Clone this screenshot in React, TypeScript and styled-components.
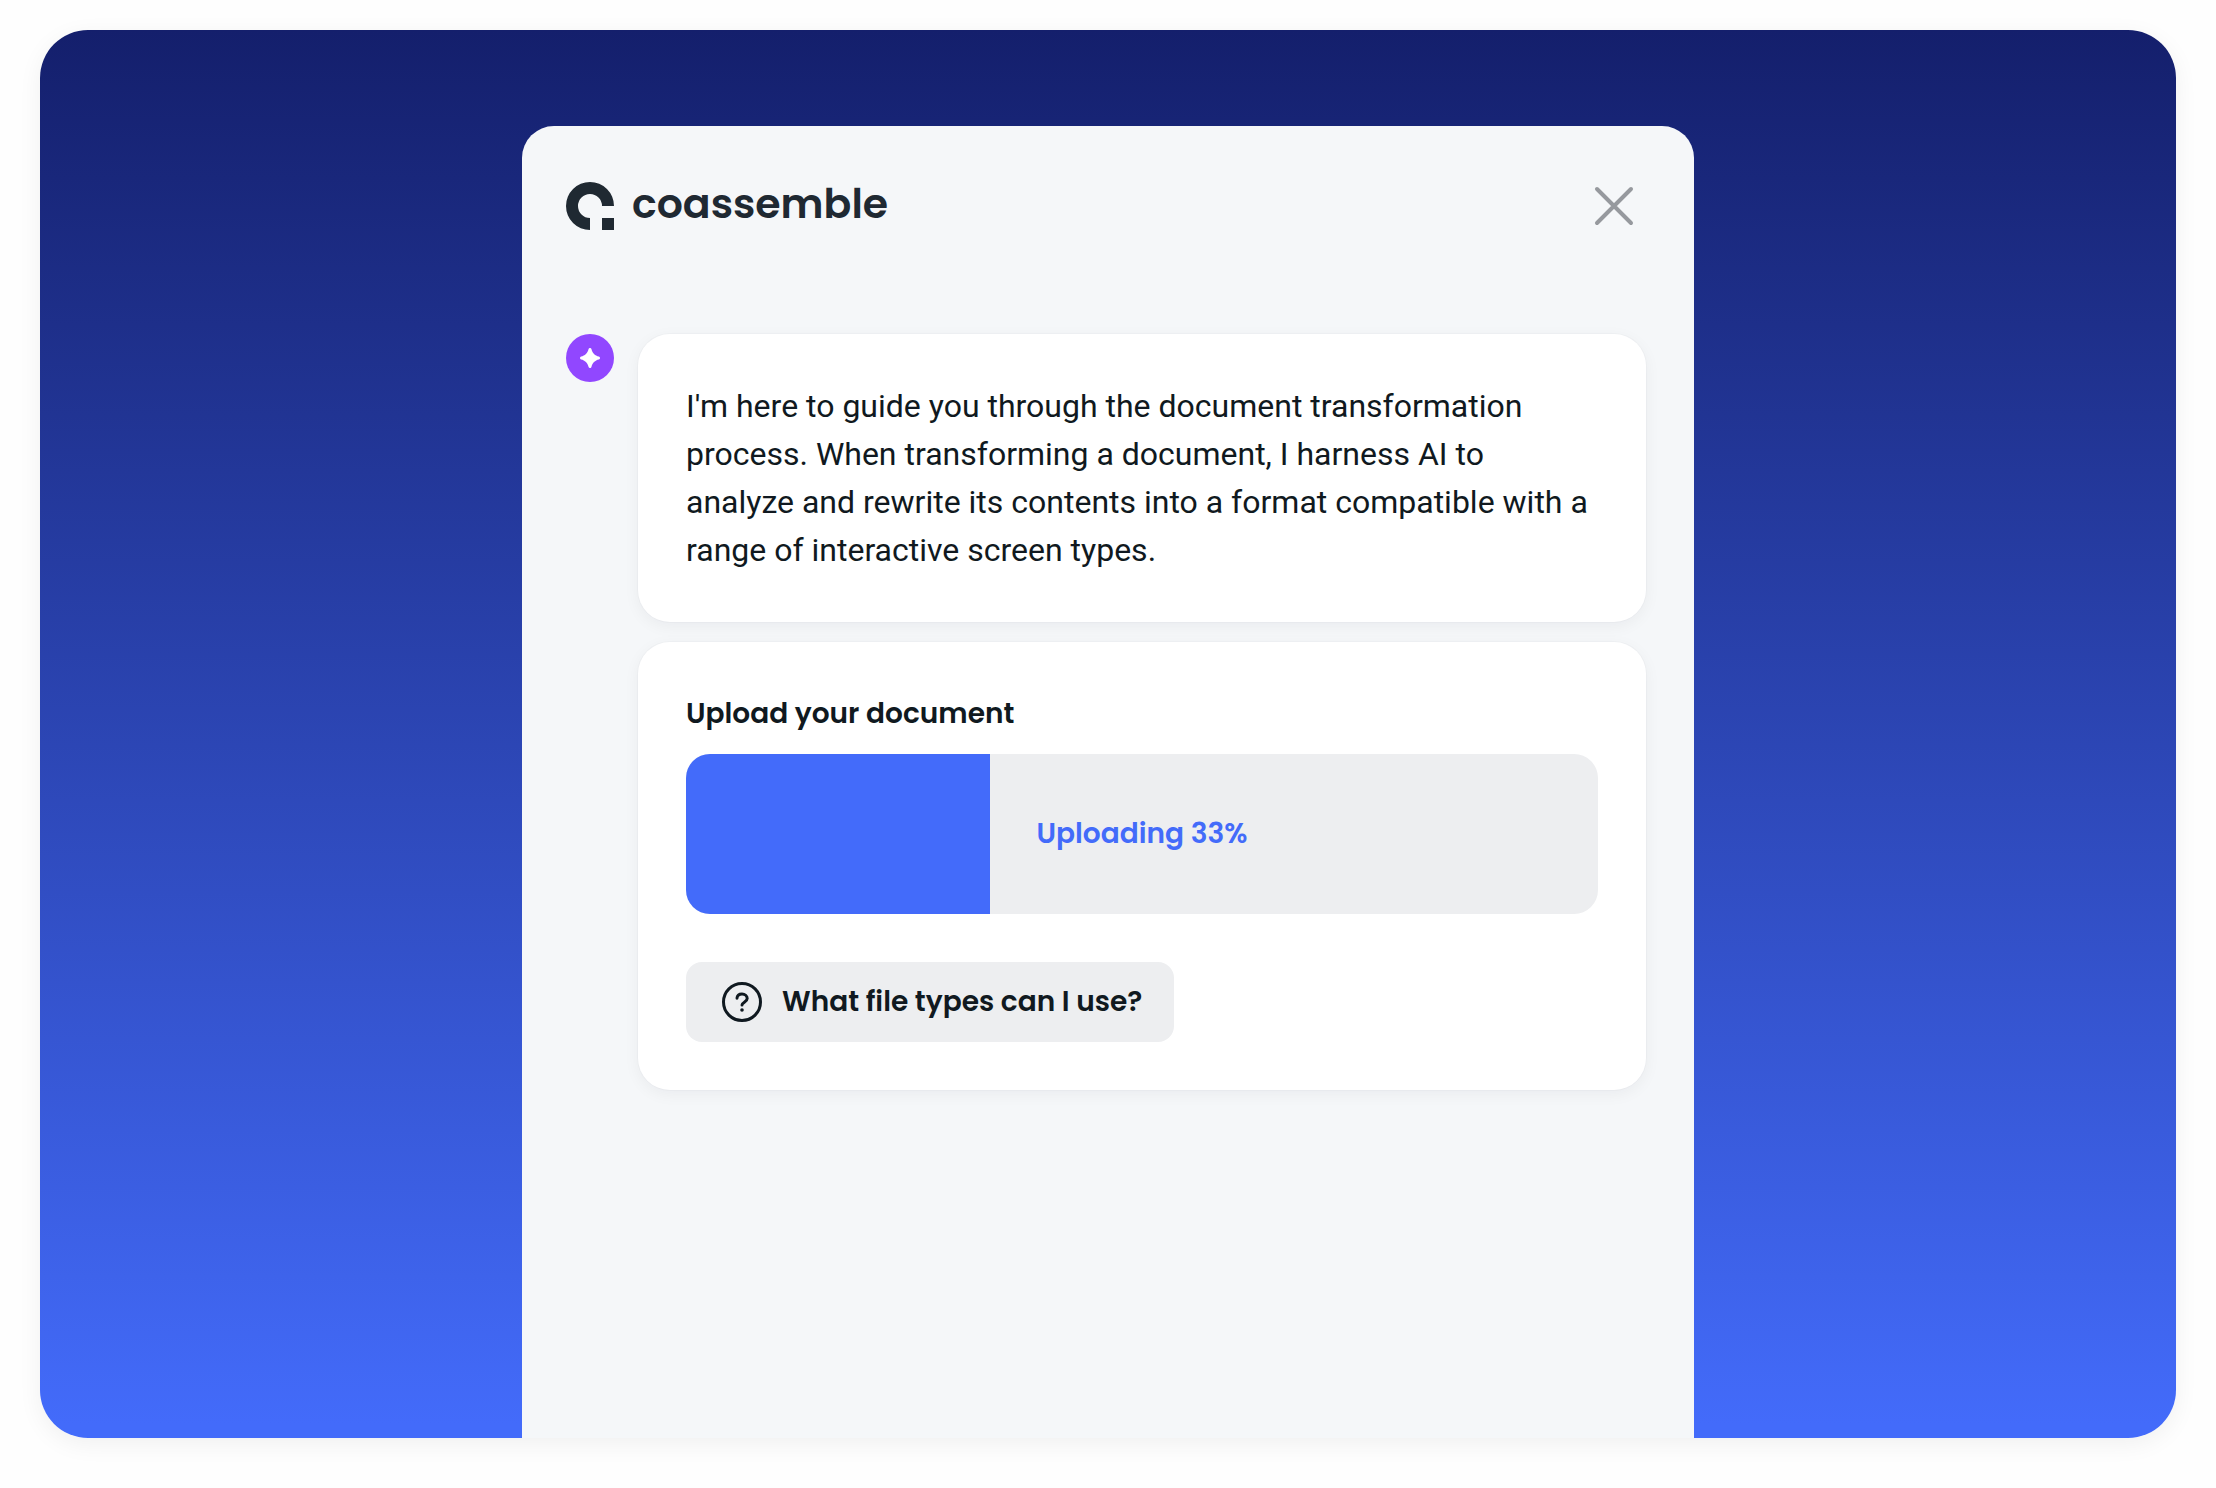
import React from "react";
import styled, { createGlobalStyle } from "styled-components";

const color = {
  ink: "#101920",
  logo: "#1f2932",
  blue: "#436bfa",
  purple: "#9147ff",
  panel: "#f5f7f9",
  neutral: "#edeef0",
  muted: "#96999e",
};

const bodyFont = `Roboto, "Open Sans", sans-serif`;
const displayFont = `Poppins, Inter, "Open Sans", sans-serif`;

const GlobalStyle = createGlobalStyle`
  *, *::before, *::after { box-sizing: border-box; }
  body { margin: 0; background: #fefefe; color: ${color.ink}; font-family: ${bodyFont}; }
`;

const Page = styled.div`
  display: flex;
  min-height: 100vh;
  padding: 30px 40px 50px;
`;

const Stage = styled.main`
  display: flex;
  flex: 1;
  justify-content: center;
  padding: 96px 40px 0;
  border-radius: 48px;
  background: linear-gradient(180deg, #141f6c 0%, ${color.blue} 99%);
  box-shadow: 0 6px 24px rgba(0, 0, 0, 0.06);
`;

const Panel = styled.section`
  display: flex;
  flex-direction: column;
  gap: 96px;
  width: 100%;
  max-width: 1172px;
  padding: 48px 48px 48px 44px;
  border-radius: 32px 32px 0 0;
  background: ${color.panel};
`;

const Header = styled.header`
  display: flex;
  align-items: center;
  justify-content: space-between;
`;

const Brand = styled.a`
  display: flex;
  align-items: center;
  gap: 18px;
  color: ${color.logo};
  font-family: ${displayFont};
  font-size: 41px;
  font-weight: 600;
  line-height: 48px;
  text-decoration: none;
`;

const BrandName = styled.span`
  padding-bottom: 4px;
`;

const CloseButton = styled.button`
  display: grid;
  place-items: center;
  width: 64px;
  height: 64px;
  padding: 0;
  border: 0;
  background: none;
  color: ${color.muted};
  cursor: pointer;
`;

const Conversation = styled.div`
  display: flex;
  align-items: flex-start;
  gap: 24px;
`;

const Avatar = styled.div`
  display: grid;
  flex: none;
  place-items: center;
  width: 48px;
  height: 48px;
  border-radius: 50%;
  background: ${color.purple};
`;

const Messages = styled.div`
  display: flex;
  flex: 1;
  flex-direction: column;
  gap: 20px;
  min-width: 0;
`;

const Bubble = styled.article`
  display: flex;
  flex-direction: column;
  align-items: flex-start;
  padding: 48px;
  border-radius: 32px;
  background: #fff;
  box-shadow: 0 0 0 1px rgba(16, 25, 32, 0.02), 0 4px 16px rgba(16, 25, 32, 0.05);
`;

const Message = styled.p`
  margin: 0;
  font-size: 32px;
  line-height: 48px;
`;

const FieldLabel = styled.label`
  margin-bottom: 16px;
  font-family: ${displayFont};
  font-size: 28px;
  font-weight: 600;
  line-height: 48px;
`;

const Upload = styled.div`
  display: grid;
  align-items: center;
  justify-items: center;
  width: 100%;
  margin-bottom: 48px;

  & > * {
    grid-area: 1 / 1;
  }
`;

const Progress = styled.progress`
  display: block;
  width: 100%;
  height: 160px;
  border: 0;
  border-radius: 24px;
  overflow: hidden;
  appearance: none;
  background: ${color.neutral};

  &::-webkit-progress-bar {
    background: ${color.neutral};
  }
  &::-webkit-progress-value {
    background: ${color.blue};
  }
  &::-moz-progress-bar {
    background: ${color.blue};
  }
`;

const Status = styled.span`
  z-index: 1;
  color: ${color.blue};
  font-family: ${displayFont};
  font-size: 28px;
  font-weight: 600;
  line-height: 48px;
`;

const HelpButton = styled.button`
  display: flex;
  align-items: center;
  gap: 16px;
  padding: 16px 32px;
  border: 0;
  border-radius: 16px;
  background: ${color.neutral};
  color: ${color.ink};
  font-family: ${displayFont};
  font-size: 28px;
  font-weight: 600;
  line-height: 48px;
  cursor: pointer;
`;

const LogoMark = () => (
  <svg width="48" height="48" viewBox="0 0 48 48" fill="currentColor" aria-hidden="true">
    <path d="M48 24A24 24 0 1 0 24 48V36A12 12 0 1 1 36 24Z" />
    <path d="M36 36H48V48H36Z" />
  </svg>
);

const CloseIcon = () => (
  <svg width="40" height="40" viewBox="0 0 40 40" fill="none" stroke="currentColor" strokeWidth="4" strokeLinecap="round" aria-hidden="true">
    <path d="M3 3L37 37M37 3L3 37" />
  </svg>
);

const SparkIcon = () => (
  <svg width="20" height="20" viewBox="0 0 20 20" fill="#fff" aria-hidden="true">
    <path d="M10 0C10.8 0 11.3 .4 11.5 1.2C12.2 4.8 15.2 7.8 18.8 8.5C19.6 8.7 20 9.2 20 10S19.6 11.3 18.8 11.5C15.2 12.2 12.2 15.2 11.5 18.8C11.3 19.6 10.8 20 10 20S8.7 19.6 8.5 18.8C7.8 15.2 4.8 12.2 1.2 11.5C.4 11.3 0 10.8 0 10S.4 8.7 1.2 8.5C4.8 7.8 7.8 4.8 8.5 1.2C8.7 .4 9.2 0 10 0Z" />
  </svg>
);

const HelpIcon = () => (
  <svg width="48" height="48" viewBox="0 0 48 48" fill="none" stroke="currentColor" strokeWidth="3" strokeLinecap="round" strokeLinejoin="round" aria-hidden="true">
    <circle cx="24" cy="24" r="18.5" />
    <path d="M19 20.2C19.2 17.6 21.3 16 24 16C26.9 16 29.2 18 29.2 20.6C29.2 24 24 24.3 24 27" />
    <circle cx="24" cy="32" r="1.8" fill="currentColor" stroke="none" />
  </svg>
);

const uploadedThirds = 1;

export default function App() {
  const percent = Math.round((uploadedThirds / 3) * 100);

  return (
    <>
      <GlobalStyle />
      <Page>
        <Stage>
          <Panel>
            <Header>
              <Brand href="#">
                <LogoMark />
                <BrandName>coassemble</BrandName>
              </Brand>
              <CloseButton type="button" aria-label="Close">
                <CloseIcon />
              </CloseButton>
            </Header>
            <Conversation>
              <Avatar>
                <SparkIcon />
              </Avatar>
              <Messages>
                <Bubble>
                  <Message>
                    I'm here to guide you through the document transformation process. When
                    transforming a document, I harness AI to analyze and rewrite its contents into a
                    format compatible with a range of interactive screen types.
                  </Message>
                </Bubble>
                <Bubble>
                  <FieldLabel htmlFor="upload">Upload your document</FieldLabel>
                  <Upload>
                    <Progress id="upload" value={uploadedThirds} max={3} />
                    <Status>Uploading {percent}%</Status>
                  </Upload>
                  <HelpButton type="button">
                    <HelpIcon />
                    What file types can I use?
                  </HelpButton>
                </Bubble>
              </Messages>
            </Conversation>
          </Panel>
        </Stage>
      </Page>
    </>
  );
}
